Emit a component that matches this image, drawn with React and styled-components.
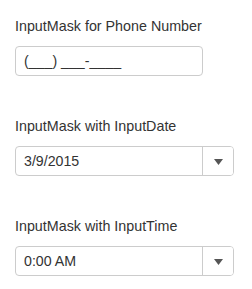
import React from 'react';
import styled, { createGlobalStyle } from 'styled-components';

const GlobalStyle = createGlobalStyle`
  body {
    margin: 0;
    background: #fff;
    font-family: 'Liberation Sans', Arial, sans-serif;
  }
`;

const Page = styled.div`
  display: flex;
  flex-direction: column;
  gap: 40px;
  padding: 16px 0 0 15px;
`;

const Field = styled.div`
  display: flex;
  flex-direction: column;
  gap: 10px;
`;

const Label = styled.label`
  font-size: 14.3px;
  line-height: 20px;
  color: #333;
`;

const Box = styled.div`
  display: flex;
  width: ${props => props.width}px;
  height: 30px;
  box-sizing: border-box;
  border: 1px solid #ccc;
  border-radius: 4px;
  background: #fff;
  overflow: hidden;
`;

const Input = styled.input`
  flex: 1;
  min-width: 0;
  border: none;
  outline: none;
  padding: 0 8px;
  font-family: 'Liberation Sans', Arial, sans-serif;
  font-size: 14.2px;
  color: #333;
  background: transparent;
`;

const DropButton = styled.button`
  width: 31px;
  flex: none;
  display: flex;
  align-items: center;
  justify-content: center;
  border: none;
  border-left: 1px solid #ccc;
  background: #fff;
  padding: 2px 0 0;
`;

const Caret = () => (
  <svg width="9" height="6" viewBox="0 0 9 6">
    <path d="M0 0 H9 L4.5 6 Z" fill="#555" />
  </svg>
);

const App = () => (
  <>
    <GlobalStyle />
    <Page>
      <Field>
        <Label>InputMask for Phone Number</Label>
        <Box width={188}>
          <Input defaultValue="(___) ___-____" />
        </Box>
      </Field>
      <Field>
        <Label>InputMask with InputDate</Label>
        <Box width={219}>
          <Input defaultValue="3/9/2015" />
          <DropButton><Caret /></DropButton>
        </Box>
      </Field>
      <Field>
        <Label>InputMask with InputTime</Label>
        <Box width={219}>
          <Input defaultValue="0:00 AM" />
          <DropButton><Caret /></DropButton>
        </Box>
      </Field>
    </Page>
  </>
);

export default App;
